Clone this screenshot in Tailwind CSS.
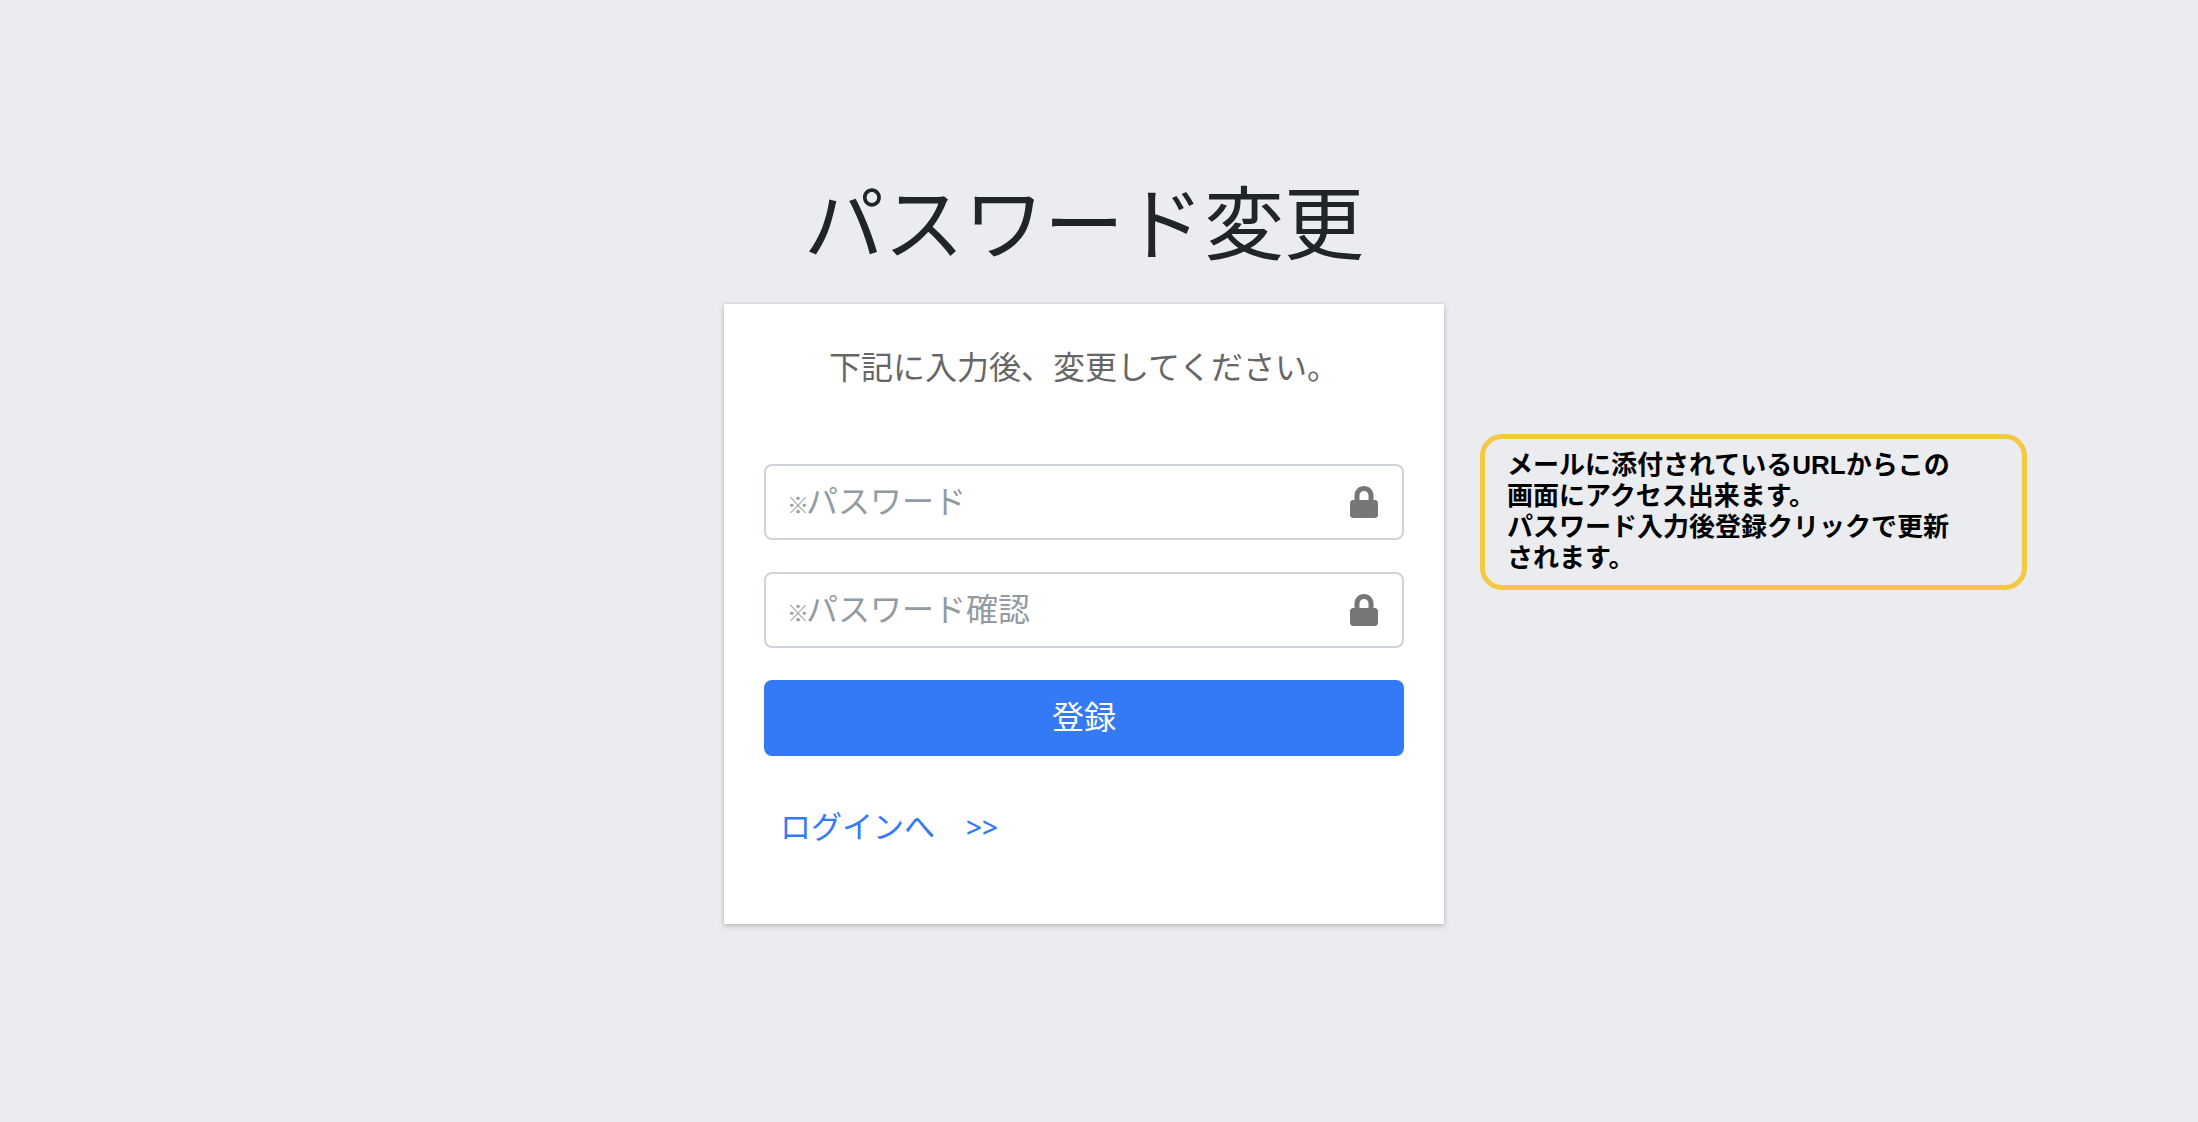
<!DOCTYPE html>
<html lang="ja">
<head>
<meta charset="utf-8">
<meta name="viewport" content="width=device-width, initial-scale=1">
<title>パスワード変更</title>
<script src="https://cdn.jsdelivr.net/npm/@tailwindcss/browser@4"></script>
</head>
<body class="min-h-screen bg-[#eaecef] font-['Liberation_Sans','Noto_Sans_CJK_JP',sans-serif] text-[32px] leading-12 text-[#212529]">
<main class="grid grid-cols-[1fr_720px_1fr] gap-x-9 pt-[166px] pr-[30px]">
  <h1 class="col-start-2 mb-[18px] text-center text-[80px] leading-[120px]">パスワード変更</h1>

  <section class="col-start-2 row-start-2 bg-white px-10 pt-10 pb-18 shadow-[0_0_2px_rgba(0,0,0,0.125),0_2px_6px_rgba(0,0,0,0.2)]">
    <p class="mb-18 text-center text-[#666]">下記に入力後、変更してください。</p>
    <form class="flex flex-col gap-8">
      <div class="flex h-19 items-center rounded-lg border-2 border-[#ced4da] px-6">
        <div class="flex min-w-0 flex-1 items-baseline pt-1">
          <label for="password" class="flex w-4 justify-center text-[22px] font-bold text-[#939ba2]">※</label>
          <input id="password" type="password" aria-label="パスワード" placeholder="パスワード" class="min-w-0 flex-1 bg-transparent outline-none placeholder:text-[#939ba2]">
        </div>
        <svg class="h-8 w-7" viewBox="0 0 448 512" fill="#777" aria-hidden="true"><path d="M400 224h-24v-72C376 68.2 307.800 0 224 0S72 68.200 72 152v72H48c-26.500 0-48 21.500-48 48v192c0 26.500 21.500 48 48 48h352c26.500 0 48-21.500 48-48V272c0-26.500-21.500-48-48-48zm-104 0H152v-72c0-39.700 32.300-72 72-72s72 32.300 72 72v72z"/></svg>
      </div>
      <div class="flex h-19 items-center rounded-lg border-2 border-[#ced4da] px-6">
        <div class="flex min-w-0 flex-1 items-baseline pt-1">
          <label for="password-confirm" class="flex w-4 justify-center text-[22px] font-bold text-[#939ba2]">※</label>
          <input id="password-confirm" type="password" aria-label="パスワード確認" placeholder="パスワード確認" class="min-w-0 flex-1 bg-transparent outline-none placeholder:text-[#939ba2]">
        </div>
        <svg class="h-8 w-7" viewBox="0 0 448 512" fill="#777" aria-hidden="true"><path d="M400 224h-24v-72C376 68.2 307.800 0 224 0S72 68.200 72 152v72H48c-26.500 0-48 21.500-48 48v192c0 26.500 21.500 48 48 48h352c26.500 0 48-21.500 48-48V272c0-26.500-21.500-48-48-48zm-104 0H152v-72c0-39.700 32.300-72 72-72s72 32.300 72 72v72z"/></svg>
      </div>
      <button type="submit" class="h-19 rounded-lg bg-[#347af7] text-white">登録</button>
    </form>
    <p class="mt-12 flex px-4"><a href="#" class="text-[31px] text-[#347af7]">ログインへ　<span class="font-['Noto_Sans'] text-[28px] leading-none font-medium">&gt;&gt;</span></a></p>
  </section>

  <aside class="col-start-3 row-start-2 mt-[130px] w-[547px] self-start rounded-[22px] border-5 border-[#f5c842] px-[22px] py-[11px] text-[26px] leading-[31px] font-bold text-black">
    メールに添付されているURLからこの<br>画面にアクセス出来ます。<br>パスワード入力後登録クリックで更新<br>されます。
  </aside>
</main>
</body>
</html>
